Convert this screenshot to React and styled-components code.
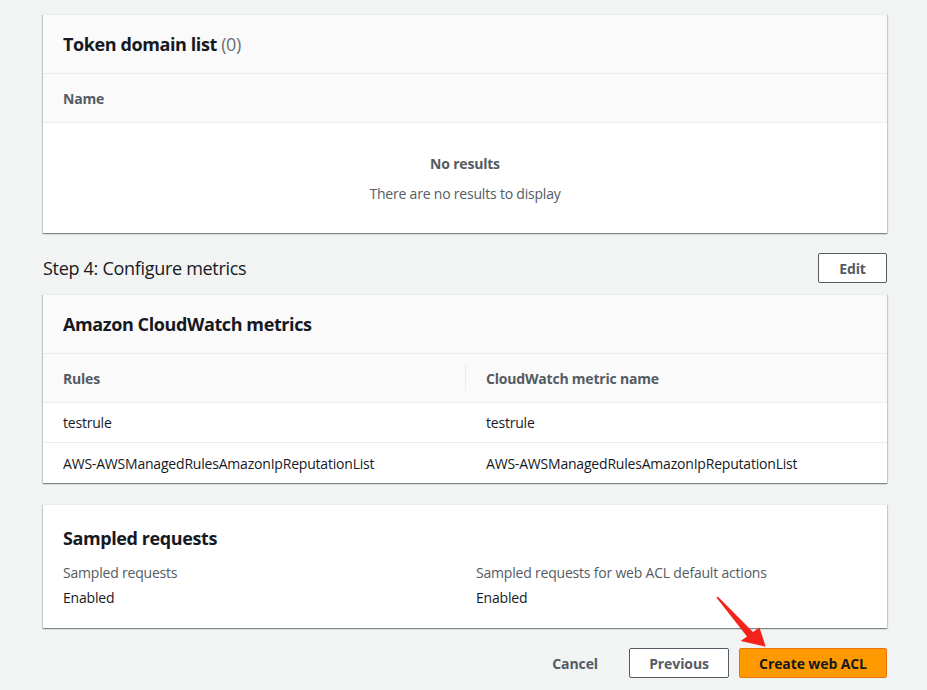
import React from "react";
import styled, { createGlobalStyle } from "styled-components";

const GlobalStyle = createGlobalStyle`
  *, *::before, *::after {
    box-sizing: border-box;
  }
  html, body {
    margin: 0;
    padding: 0;
    background: #f2f3f3;
  }
  body {
    font-family: "Open Sans", "Noto Sans", Arial, sans-serif;
    color: #16191f;
    letter-spacing: -0.2px;
    -webkit-font-smoothing: antialiased;
  }
`;

const Page = styled.div`
  position: relative;
  width: 927px;
  height: 690px;
  padding: 14px 40px 0 43px;
  overflow: hidden;
`;

const Card = styled.div`
  background: #fff;
  border-top: 1px solid #eaeded;
  box-shadow: 0 1px 1px 0 rgba(0, 28, 36, 0.3), 1px 1px 1px 0 rgba(0, 28, 36, 0.15),
    -1px 1px 1px 0 rgba(0, 28, 36, 0.15);
  margin-bottom: ${(p) => p.$mb || 0}px;
`;

const CardHeader = styled.div`
  height: ${(p) => (p.$plain ? 58 : 59)}px;
  display: flex;
  align-items: center;
  padding: ${(p) => (p.$plain ? "8px 20px 0" : "0 20px 1px")};
  background: ${(p) => (p.$plain ? "#fff" : "#fafafa")};
  border-bottom: ${(p) => (p.$plain ? "none" : "1px solid #eaeded")};
`;

const Title = styled.h2`
  margin: 0;
  font-size: 18px;
  font-weight: 700;
  color: #16191f;
  letter-spacing: -0.4px;
`;

const Count = styled.span`
  font-weight: 400;
  color: #687078;
`;

const TableHead = styled.div`
  display: grid;
  grid-template-columns: ${(p) => p.$cols || "1fr"};
  height: 49px;
  align-items: center;
  background: #fafafa;
  border-bottom: 1px solid #eaeded;
`;

const HeadCell = styled.div`
  padding: 0 20px;
  font-size: 14px;
  font-weight: 700;
  color: #545b64;
  display: flex;
  align-items: center;
  height: 26px;
  border-left: ${(p) => (p.$divider ? "1px solid #eaeded" : "none")};
`;

const Row = styled.div`
  display: grid;
  grid-template-columns: 1fr 1fr;
  height: 40px;
  align-items: center;
  border-bottom: ${(p) => (p.$last ? "none" : "1px solid #eaeded")};
`;

const Cell = styled.div`
  font-size: 14px;
  color: #16191f;
  padding: 0 20px 0 ${(p) => (p.$right ? "21px" : "20px")};
`;

const Empty = styled.div`
  height: 110px;
  display: flex;
  flex-direction: column;
  align-items: center;
  justify-content: center;
  gap: 11px;
  font-size: 14px;
  color: #545b64;
`;

const EmptyTitle = styled.div`
  font-weight: 700;
`;

const StepRow = styled.div`
  display: flex;
  align-items: center;
  justify-content: space-between;
  padding: 20px 0 11px;
`;

const StepTitle = styled.h2`
  margin: 0;
  font-size: 18px;
  font-weight: 400;
  color: #16191f;
  letter-spacing: -0.3px;
`;

const Button = styled.button`
  font-family: inherit;
  font-size: 14px;
  font-weight: 700;
  letter-spacing: -0.1px;
  white-space: nowrap;
  height: 30px;
  width: ${(p) => (p.$w ? `${p.$w}px` : "auto")};
  padding: 0 ${(p) => (p.$w ? 0 : 20)}px;
  border-radius: 2px;
  cursor: pointer;
  border: 1px solid
    ${(p) => (p.$variant === "primary" ? "#ec7211" : p.$variant === "link" ? "transparent" : "#545b64")};
  background: ${(p) => (p.$variant === "primary" ? "#ff9900" : p.$variant === "link" ? "transparent" : "#fff")};
  color: ${(p) => (p.$variant === "primary" ? "#16191f" : "#545b64")};
`;

const SampledBody = styled.div`
  display: grid;
  grid-template-columns: 1fr 1fr;
  padding: 0 20px 21px;
`;

const KeyValue = styled.div`
  display: flex;
  flex-direction: column;
  gap: 6px;
  font-size: 14px;
  padding-left: ${(p) => (p.$right ? "11px" : "0")};
`;

const Label = styled.div`
  color: #545b64;
`;

const Value = styled.div`
  color: #16191f;
`;

const Footer = styled.div`
  display: flex;
  justify-content: flex-end;
  align-items: center;
  gap: 10px;
  margin-top: 20px;
`;

const Arrow = styled.svg`
  position: absolute;
  left: 700px;
  top: 590px;
  pointer-events: none;
`;

export default function App() {
  return (
    <>
      <GlobalStyle />
      <Page>
        <Card>
          <CardHeader>
            <Title>
              Token domain list <Count>(0)</Count>
            </Title>
          </CardHeader>
          <TableHead>
            <HeadCell>Name</HeadCell>
          </TableHead>
          <Empty>
            <EmptyTitle>No results</EmptyTitle>
            <div>There are no results to display</div>
          </Empty>
        </Card>

        <StepRow>
          <StepTitle>Step 4: Configure metrics</StepTitle>
          <Button $w={69}>Edit</Button>
        </StepRow>

        <Card $mb={21}>
          <CardHeader>
            <Title>Amazon CloudWatch metrics</Title>
          </CardHeader>
          <TableHead $cols="1fr 1fr">
            <HeadCell>Rules</HeadCell>
            <HeadCell $divider>CloudWatch metric name</HeadCell>
          </TableHead>
          <Row>
            <Cell>testrule</Cell>
            <Cell $right>testrule</Cell>
          </Row>
          <Row $last>
            <Cell>AWS-AWSManagedRulesAmazonIpReputationList</Cell>
            <Cell $right>AWS-AWSManagedRulesAmazonIpReputationList</Cell>
          </Row>
        </Card>

        <Card>
          <CardHeader $plain>
            <Title>Sampled requests</Title>
          </CardHeader>
          <SampledBody>
            <KeyValue>
              <Label>Sampled requests</Label>
              <Value>Enabled</Value>
            </KeyValue>
            <KeyValue $right>
              <Label>Sampled requests for web ACL default actions</Label>
              <Value>Enabled</Value>
            </KeyValue>
          </SampledBody>
        </Card>

        <Footer>
          <Button $variant="link">Cancel</Button>
          <Button $w={100}>Previous</Button>
          <Button $variant="primary" $w={148}>
            Create web ACL
          </Button>
        </Footer>

        <Arrow width="80" height="70" viewBox="0 0 80 70">
          <path d="M16 7 L18.5 7.2 L53 42 L59.5 37.5 L65.7 56.7 L40.7 51 L47 46.5 Z" fill="#f5221b" />
        </Arrow>
      </Page>
    </>
  );
}
